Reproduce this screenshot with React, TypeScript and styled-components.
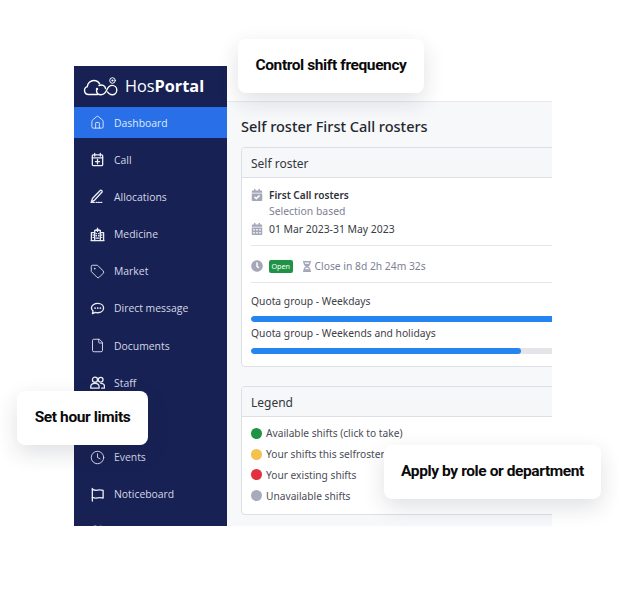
import React from "react";
import styled, { createGlobalStyle } from "styled-components";
import { Clock, File, House, Tag } from "lucide-react";
import {
  FaCalendarCheck,
  FaCalendarAlt,
  FaClock,
  FaHourglassHalf,
} from "react-icons/fa";

const GlobalStyle = createGlobalStyle`
  html, body {
    margin: 0;
    background: #fff;
  }
`;

const Stage = styled.div`
  position: relative;
  width: 619px;
  height: 599px;
  padding: 66px 0 0 74px;
  box-sizing: border-box;
  overflow: hidden;
  font-family: "Noto Sans", sans-serif;
`;

const Frame = styled.div`
  display: grid;
  grid-template-columns: 153px 325px;
  width: 478px;
  height: 460px;
  overflow: hidden;
`;

const Sidebar = styled.aside`
  background: #182153;
  overflow: hidden;
`;

const Brand = styled.div`
  display: flex;
  align-items: center;
  gap: 3px;
  height: 41px;
  padding-left: 9px;
  color: #fff;
  font-family: "Open Sans", sans-serif;
  font-size: 16.3px;
  line-height: 1;
`;

const BrandStrong = styled.b`
  font-weight: 700;
`;

const Nav = styled.nav`
  display: flex;
  flex-direction: column;
  gap: 6.2px;
`;

const NavItem = styled.div<{ $active?: boolean }>`
  display: flex;
  flex: none;
  align-items: center;
  gap: 9px;
  height: 31px;
  padding-left: 16px;
  background: ${(p) => (p.$active ? "#2970e8" : "transparent")};
  color: ${(p) => (p.$active ? "#dfe9fb" : "#d5d8e6")};
  font-family: "Open Sans", sans-serif;
  font-size: 10.4px;

  svg {
    flex: none;
    width: 15px;
    height: 15px;
    stroke-width: 1.4;
    color: #eceef6;
  }
`;

const Main = styled.main`
  background: #f6f8fa;
  min-width: 0;
  overflow: hidden;
`;

const TopBar = styled.div`
  height: 35px;
  background: #fff;
  border-bottom: 1px solid #e6e8eb;
`;

const Content = styled.div`
  display: flex;
  flex-direction: column;
  width: 400px;
  padding: 14px 0 0 14px;
`;

const Title = styled.h1`
  margin: 0 0 11px;
  color: #25272e;
  font-size: 14.5px;
  font-weight: 500;
  line-height: 20px;
`;

const Card = styled.section<{ $height: number }>`
  height: ${(p) => p.$height}px;
  margin-bottom: 19px;
  box-sizing: border-box;
  background: #fff;
  border: 1px solid #dcdfe3;
  border-radius: 4px;
  overflow: hidden;
`;

const CardHeader = styled.header`
  display: flex;
  align-items: center;
  height: 30px;
  padding: 1px 0 0 9px;
  box-sizing: border-box;
  background: #f6f7f8;
  border-bottom: 1px solid #dcdfe3;
  color: #33363d;
  font-size: 12px;
`;

const CardBody = styled.div`
  padding: 8px 9px;
`;

const LegendBody = styled.div`
  padding: 6px 9px 0;
`;

const Row = styled.div<{ $height: number; $pad?: number }>`
  display: flex;
  align-items: center;
  gap: 6px;
  height: ${(p) => p.$height}px;
  padding-top: ${(p) => p.$pad ?? 0}px;
  box-sizing: border-box;
  color: #383b44;
  font-size: 10.4px;

  > svg {
    flex: none;
    width: 12px;
    height: 12px;
    color: #a4a7b8;
  }
`;

const Strong = styled.span`
  font-weight: 600;
  font-size: 10.1px;
  color: #2e3038;
`;

const Muted = styled.span`
  margin-left: 18px;
  color: #7d8093;
`;

const Rule = styled.hr<{ $top?: number }>`
  height: 1px;
  margin: ${(p) => p.$top ?? 0}px 0 0;
  border: 0;
  background: #e6e7ea;
`;

const Badge = styled.span`
  display: flex;
  align-items: center;
  height: 13px;
  padding: 0 2.5px;
  background: #1f9345;
  border-radius: 2px;
  color: #fff;
  font-size: 7.2px;
`;

const Timer = styled.span`
  display: flex;
  align-items: center;
  gap: 3px;
  margin-left: 3px;
  color: #7d8093;
  font-size: 10.3px;

  svg {
    width: 10px;
    height: 11px;
    color: #a4a7b8;
  }
`;

const QuotaLabel = styled.div<{ $top: number }>`
  margin-top: ${(p) => p.$top}px;
  color: #3e4048;
  font-size: 10.3px;
  line-height: 15px;
`;

const Track = styled.div`
  height: 6px;
  margin-top: 7px;
  background: #e4e5e8;
  border-radius: 3px;
  overflow: hidden;
`;

const Fill = styled.div`
  height: 100%;
  background: #2484f0;
  border-radius: 3px;
`;

const LegendRow = styled.div`
  display: flex;
  align-items: center;
  gap: 4px;
  height: 20.8px;
  color: #4a4c56;
  font-size: 10.2px;
`;

const Dot = styled.span<{ $color: string }>`
  flex: none;
  width: 11px;
  height: 11px;
  border-radius: 50%;
  background: ${(p) => p.$color};
`;

const Callout = styled.div<{ $top: number; $left: number; $width: number }>`
  position: absolute;
  top: ${(p) => p.$top}px;
  left: ${(p) => p.$left}px;
  display: flex;
  align-items: center;
  justify-content: center;
  width: ${(p) => p.$width}px;
  height: 54px;
  padding-bottom: 2px;
  box-sizing: border-box;
  background: #fff;
  border-radius: 8px;
  box-shadow: 0 8px 22px rgba(30, 35, 60, 0.14);
  color: #0a0a0c;
  font-family: Roboto, sans-serif;
  font-size: 15.5px;
  font-weight: 700;
  letter-spacing: -0.4px;
`;

const LogoMark = () => (
  <svg width="39" height="22" viewBox="0 0 39 22" fill="none" stroke="#fff" strokeWidth="1.4" strokeLinecap="round">
    <path d="M14.5 18.5H5.5a4 4 0 0 1-1.2-7.8A6.6 6.6 0 0 1 11 4.5c2.5 0 4.5 1.3 5.6 3.3" />
    <path d="M13.5 14.5c0 2.6 2 4.3 4.4 4.3 3 0 5-2.6 6-5 1-2.4 2.6-4.4 5.2-4.4a4.6 4.6 0 1 1 0 9.4c-2.2 0-3.6-1.2-4.6-2.8" />
    <path d="M16 9.5c3-1.5 6 .2 6.6 3" />
    <circle cx="29.5" cy="4.5" r="2.8" strokeWidth="1" />
    <circle cx="29.5" cy="4.5" r="1.1" fill="#fff" stroke="none" />
    <circle cx="14" cy="13" r="1.2" fill="#fff" stroke="none" />
  </svg>
);

const NavSvg = ({ children }: { children: React.ReactNode }) => (
  <svg viewBox="0 0 16 16" fill="none" stroke="currentColor" strokeLinecap="round" strokeLinejoin="round">
    {children}
  </svg>
);

const CallIcon = () => (
  <NavSvg>
    <rect x="2.5" y="3" width="11" height="11.5" rx="1" />
    <path d="M2.5 6.3h11M5 1.5v2.8M11 1.5v2.8M8 8v4.5M5.8 10.2h4.4" />
  </NavSvg>
);

const PenIcon = () => (
  <NavSvg>
    <path d="M1.2 14 2.8 9.8 10.6 1.8a1.3 1.3 0 0 1 2 1.7L5 11.8z" />
    <path d="M1.5 14.3h3M6.5 14.3h1M9 14.3h1M11.5 14.3h1" />
  </NavSvg>
);

const MedicineIcon = () => (
  <NavSvg>
    <path d="M1.5 14.5V6h3.5M14.5 14.5V6H11M1 14.5h14" />
    <path d="M5 14.5V3.5h6v11" />
    <path d="M8 1.3v3.4M6.4 3h3.2" />
    <path d="M6.5 7h.4M9.1 7h.4M6.5 9.3h.4M9.1 9.3h.4M3.3 8.5h.3M12.4 8.5h.3M3.3 11h.3M12.4 11h.3M6.5 11.8h3" />
  </NavSvg>
);

const ChatIcon = () => (
  <NavSvg>
    <path d="M8.3 2.5c3.6 0 6.2 2.2 6.2 5s-2.6 5-6.2 5c-.9 0-1.7-.1-2.5-.4L2.6 13.5l.6-3c-1-.8-1.7-1.9-1.7-3 0-2.8 3.2-5 6.8-5z" />
    <path d="M5.4 7.5h.1M8.2 7.5h.1M11 7.5h.1" strokeWidth="1.8" />
  </NavSvg>
);

const StaffIcon = () => (
  <NavSvg>
    <circle cx="5.3" cy="5" r="2.7" />
    <circle cx="11.4" cy="5" r="2.5" />
    <path d="M.8 14v-1.5c0-2 1.8-3.5 4.5-3.5s4.4 1.5 4.4 3.5V14zM11.5 9c2.4 0 3.9 1.4 3.9 3.3V14h-3" />
  </NavSvg>
);

const FlagIcon = () => (
  <NavSvg>
    <path d="M2.5 1.5v13.5" />
    <path d="M2.5 2.6c2.2 1 3.5 1.2 5.5.8 2-.4 3.6-.4 6 .2v8.2c-2.2-.8-4-.6-6-.2-2 .4-3.5.2-5.5-.6" />
  </NavSvg>
);

const navItems = [
  { label: "Dashboard", icon: <House /> },
  { label: "Call", icon: <CallIcon /> },
  { label: "Allocations", icon: <PenIcon /> },
  { label: "Medicine", icon: <MedicineIcon /> },
  { label: "Market", icon: <Tag /> },
  { label: "Direct message", icon: <ChatIcon /> },
  { label: "Documents", icon: <File /> },
  { label: "Staff", icon: <StaffIcon /> },
  { label: "Leave", icon: <CallIcon /> },
  { label: "Events", icon: <Clock /> },
  { label: "Noticeboard", icon: <FlagIcon /> },
  { label: "Reports", icon: <StaffIcon /> },
];

const legend = [
  { label: "Available shifts (click to take)", color: "#1f9345" },
  { label: "Your shifts this selfroster", color: "#f2c14e" },
  { label: "Your existing shifts", color: "#e3303f" },
  { label: "Unavailable shifts", color: "#a9abbd" },
];

export default function App() {
  return (
    <Stage>
      <GlobalStyle />
      <Frame>
        <Sidebar>
          <Brand>
            <LogoMark />
            <span>
              Hos<BrandStrong>Portal</BrandStrong>
            </span>
          </Brand>
          <Nav>
            {navItems.map((item, i) => (
              <NavItem key={item.label} $active={i === 0}>
                {item.icon}
                {item.label}
              </NavItem>
            ))}
          </Nav>
        </Sidebar>
        <Main>
          <TopBar />
          <Content>
            <Title>Self roster First Call rosters</Title>
            <Card $height={220}>
              <CardHeader>Self roster</CardHeader>
              <CardBody>
                <Row $height={17}>
                  <FaCalendarCheck />
                  <Strong>First Call rosters</Strong>
                </Row>
                <Row $height={16}>
                  <Muted>Selection based</Muted>
                </Row>
                <Row $height={20}>
                  <FaCalendarAlt />
                  01 Mar 2023-31 May 2023
                </Row>
                <Rule $top={6} />
                <Row $height={36} $pad={4}>
                  <FaClock />
                  <Badge>Open</Badge>
                  <Timer>
                    <FaHourglassHalf />
                    Close in 8d 2h 24m 32s
                  </Timer>
                </Row>
                <Rule />
                <QuotaLabel $top={11}>Quota group - Weekdays</QuotaLabel>
                <Track>
                  <Fill style={{ width: "100%" }} />
                </Track>
                <QuotaLabel $top={4}>Quota group - Weekends and holidays</QuotaLabel>
                <Track>
                  <Fill style={{ width: "71%" }} />
                </Track>
              </CardBody>
            </Card>
            <Card $height={129}>
              <CardHeader>Legend</CardHeader>
              <LegendBody>
                {legend.map((item) => (
                  <LegendRow key={item.label}>
                    <Dot $color={item.color} />
                    {item.label}
                  </LegendRow>
                ))}
              </LegendBody>
            </Card>
          </Content>
        </Main>
      </Frame>
      <Callout $top={39} $left={238} $width={186}>Control shift frequency</Callout>
      <Callout $top={391} $left={17} $width={131}>Set hour limits</Callout>
      <Callout $top={445} $left={384} $width={217}>Apply by role or department</Callout>
    </Stage>
  );
}
